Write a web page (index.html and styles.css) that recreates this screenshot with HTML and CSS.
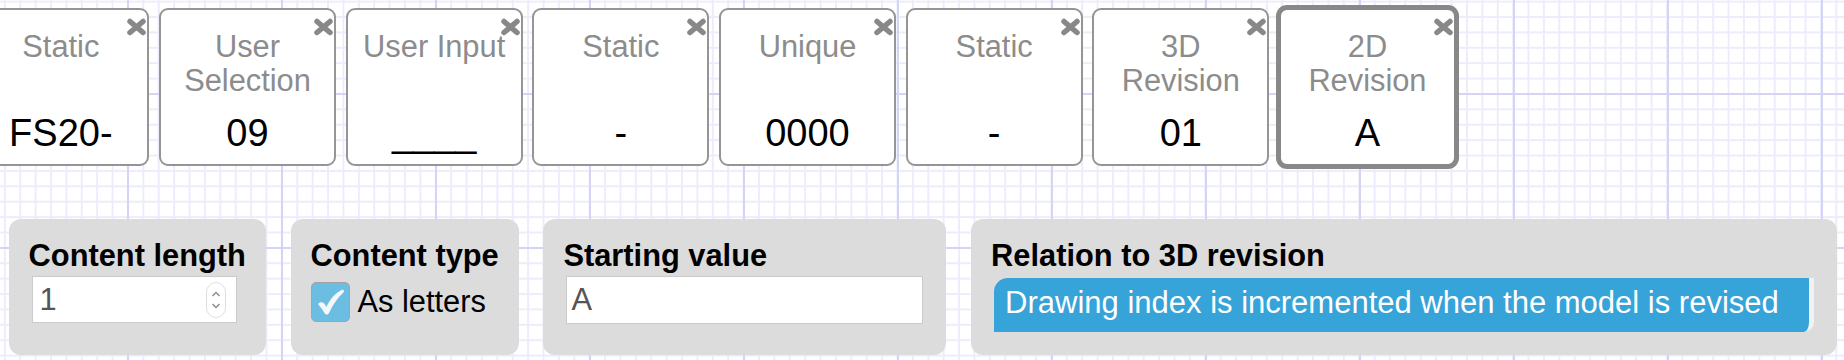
FILE: index.html
```html
<!DOCTYPE html>
<html lang="en">
<head>
  <meta charset="UTF-8">
  <meta name="viewport" content="width=device-width, initial-scale=1">
  <title>Drawing Number Builder</title>
  <link rel="stylesheet" href="styles.css">
</head>
<body>

<div class="strip">
  <div class="segment">
    <svg class="remove" viewBox="0 0 21 18"><path d="M4 3.5 L17 14.5 M17 3.5 L4 14.5"/></svg>
    <div class="seg-title">Static</div>
    <div class="seg-value">FS20-</div>
  </div>
  <div class="segment">
    <svg class="remove" viewBox="0 0 21 18"><path d="M4 3.5 L17 14.5 M17 3.5 L4 14.5"/></svg>
    <div class="seg-title">User Selection</div>
    <div class="seg-value">09</div>
  </div>
  <div class="segment">
    <svg class="remove" viewBox="0 0 21 18"><path d="M4 3.5 L17 14.5 M17 3.5 L4 14.5"/></svg>
    <div class="seg-title">User Input</div>
    <div class="seg-value">____</div>
  </div>
  <div class="segment">
    <svg class="remove" viewBox="0 0 21 18"><path d="M4 3.5 L17 14.5 M17 3.5 L4 14.5"/></svg>
    <div class="seg-title">Static</div>
    <div class="seg-value">-</div>
  </div>
  <div class="segment">
    <svg class="remove" viewBox="0 0 21 18"><path d="M4 3.5 L17 14.5 M17 3.5 L4 14.5"/></svg>
    <div class="seg-title">Unique</div>
    <div class="seg-value">0000</div>
  </div>
  <div class="segment">
    <svg class="remove" viewBox="0 0 21 18"><path d="M4 3.5 L17 14.5 M17 3.5 L4 14.5"/></svg>
    <div class="seg-title">Static</div>
    <div class="seg-value">-</div>
  </div>
  <div class="segment">
    <svg class="remove" viewBox="0 0 21 18"><path d="M4 3.5 L17 14.5 M17 3.5 L4 14.5"/></svg>
    <div class="seg-title">3D Revision</div>
    <div class="seg-value">01</div>
  </div>
  <div class="segment selected">
    <svg class="remove" viewBox="0 0 21 18"><path d="M4 3.5 L17 14.5 M17 3.5 L4 14.5"/></svg>
    <div class="seg-title">2D Revision</div>
    <div class="seg-value">A</div>
  </div>
</div>

<div class="settings">
  <div class="panel">
    <label class="panel-label">Content length</label>
    <div class="number-box">
      <input class="number-input" type="text" value="1">
      <svg class="spinner" viewBox="0 0 20 36">
        <rect x="0.5" y="0.5" width="19" height="35" rx="9.5"/>
        <path d="M6.5 14 L10 10.5 L13.5 14 M6.5 22 L10 25.5 L13.5 22"/>
      </svg>
    </div>
  </div>

  <div class="panel">
    <div class="panel-label">Content type</div>
    <label class="check-row">
      <span class="check">
        <svg viewBox="0 0 36 37"><path d="M6 21 C8 18.5 11 18.5 13 21.5 L14.5 24 C18 16 23 10.5 29.5 7 C31.5 6 33 8 31 10 C25.5 15 20.5 22 17 30 C16 32 13.5 32 12.5 30 C10.5 26.5 8.5 24 6 21 Z"/></svg>
      </span>
      As letters
    </label>
  </div>

  <div class="panel">
    <label class="panel-label">Starting value</label>
    <input class="text-input" type="text" value="A">
  </div>

  <div class="panel">
    <div class="panel-label">Relation to 3D revision</div>
    <div class="relation-select">Drawing index is incremented when the model is revised</div>
  </div>
</div>

</body>
</html>
```

FILE: styles.css
```css
html {
  background-color: #fff;
  background-image:
    linear-gradient(to right, #d4d4f7 2px, transparent 2px),
    linear-gradient(to bottom, #d4d4f7 2px, transparent 2px),
    linear-gradient(to right, #ececfc 2px, transparent 2px),
    linear-gradient(to bottom, #ececfc 2px, transparent 2px);
  background-size: 154px 154px, 154px 154px, 15.4px 15.4px, 15.4px 15.4px;
  background-position: 127px 93px, 127px 93px, 127px 93px, 127px 93px;
}

body {
  margin: 0;
  font-family: "Liberation Sans", Arial, Helvetica, sans-serif;
  color: #000;
  overflow: hidden;
}

/* segment strip */
.strip {
  display: flex;
  gap: 9.67px;
  padding-top: 8px;
  margin-left: -27.67px;
}

.segment {
  position: relative;
  flex: none;
  width: 177px;
  height: 158px;
  box-sizing: border-box;
  border: 2px solid #959595;
  border-radius: 9px;
  background: #fff;
  padding: 19.6px 10px 8.3px;
  display: flex;
  flex-direction: column;
  text-align: center;
}

.segment.selected {
  border-color: #888;
  box-shadow: 0 0 0 3px #888;
  border-radius: 8px;
}

.seg-title {
  height: 68px;
  font-size: 30.8px;
  line-height: 34px;
  color: #8c8c8c;
}

.seg-value {
  margin-top: auto;
  font-size: 38px;
  line-height: 43.7px;
  white-space: nowrap;
}

.remove {
  position: absolute;
  top: 8px;
  right: 0;
  width: 21px;
  height: 18px;
}

.remove path {
  stroke: #888;
  stroke-width: 5.5;
  stroke-linecap: round;
  fill: none;
}

/* settings panels */
.settings {
  display: flex;
  align-items: flex-start;
  gap: 24.7px;
  margin: 53px 0 0 8.6px;
}

.panel {
  height: 136px;
  box-sizing: border-box;
  padding: 19.3px 20px 0;
  background: #dcdcdc;
  border-radius: 12px;
}

.panel-label {
  display: block;
  font-weight: bold;
  font-size: 30.8px;
  line-height: 35.4px;
  white-space: nowrap;
}

.number-box {
  display: flex;
  align-items: center;
  width: 205px;
  height: 47px;
  box-sizing: border-box;
  margin: 2.3px 3px 0;
  border: 1px solid #cbcbcb;
  background: #fff;
}

.number-input {
  flex: 1;
  min-width: 0;
  border: 0;
  outline: none;
  padding: 0 0 0 7px;
  font: 30.8px "Liberation Sans", Arial, sans-serif;
  color: #555;
  background: transparent;
}

.spinner {
  flex: none;
  width: 20px;
  height: 36px;
  margin-right: 10px;
}

.spinner rect {
  fill: #fff;
  stroke: #dedede;
}

.spinner path {
  fill: none;
  stroke: #8a8a8a;
  stroke-width: 1.4;
}

.check-row {
  display: flex;
  align-items: center;
  gap: 8px;
  margin-top: 8px;
  font-size: 30.8px;
  white-space: nowrap;
}

.check {
  display: block;
  width: 39px;
  height: 40px;
  box-sizing: border-box;
  border: 1.5px solid #a4a4a4;
  border-radius: 5px;
  background: #6cbde2;
}

.check svg {
  display: block;
  width: 36px;
  height: 37px;
}

.check path {
  fill: #f4f8fa;
}

.text-input {
  display: block;
  width: 357px;
  height: 48px;
  box-sizing: border-box;
  margin: 2.3px 3px 0;
  border: 1px solid #cbcbcb;
  outline: none;
  padding: 0 0 0 4px;
  font: 30.8px "Liberation Sans", Arial, sans-serif;
  color: #555;
  background: #fff;
}

.relation-select {
  width: 820px;
  height: 54px;
  box-sizing: border-box;
  margin: 4.3px 3px 0;
  padding: 0 0 4px 11px;
  border-right: 5px solid #f2f2f2;
  border-radius: 14px 0 10px 0;
  background: #36a3d9;
  color: #fff;
  font-size: 31px;
  line-height: 50px;
  white-space: nowrap;
}
```
